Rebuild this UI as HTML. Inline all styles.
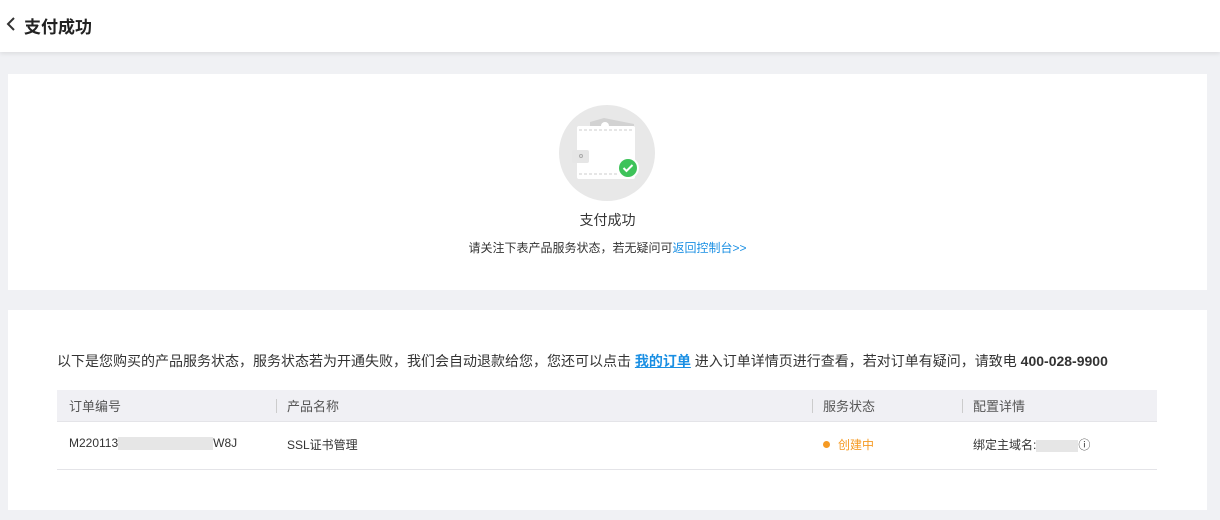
<!DOCTYPE html>
<html><head><meta charset="utf-8"><style>
*{margin:0;padding:0;box-sizing:border-box}
body{width:1220px;height:520px;background:#f0f1f4;font-family:"Liberation Sans","Noto Sans CJK SC",sans-serif;color:#333;position:relative;overflow:hidden}
.hdr{position:absolute;left:0;top:0;width:1220px;height:52px;background:#fff;box-shadow:0 2px 4px rgba(0,0,0,.08)}
.hdr .t{position:absolute;left:24px;top:13px;font-size:17px;font-weight:bold;color:#222}
.hdr svg{position:absolute;left:6px;top:17px}
.c1{position:absolute;left:8px;top:74px;width:1199px;height:216px;background:#fff}
.c2{position:absolute;left:8px;top:310px;width:1199px;height:200px;background:#fff}
.abs{position:absolute;white-space:nowrap}
</style></head><body>
<div class="hdr"><svg width="12" height="14" viewBox="0 0 12 14"><path d="M8 1L2 7l6 6" fill="none" stroke="#333" stroke-width="2"/></svg><div class="t">支付成功</div></div>
<div class="c1">
<svg class="abs" style="left:550px;top:30px" width="98" height="98" viewBox="0 0 98 98">
<circle cx="49" cy="49" r="48" fill="#e8e8e8"/>
<path d="M32 18l14-4 30 6v6H32z" fill="#d2d2d2"/>
<circle cx="47" cy="22" r="4" fill="#fff"/>
<rect x="19" y="22" width="58" height="53" rx="2" fill="#fff"/>
<line x1="21" y1="26" x2="75" y2="26" stroke="#ccc" stroke-dasharray="3 2"/>
<line x1="21" y1="70" x2="75" y2="70" stroke="#ccc" stroke-dasharray="3 2"/>
<rect x="14" y="46" width="17" height="13" rx="2" fill="#e6e6e6"/>
<circle cx="23" cy="52" r="1.5" fill="none" stroke="#aaa"/>
<circle cx="70" cy="64" r="11" fill="#fff"/><circle cx="70" cy="64" r="9" fill="#3ec35a"/>
<path d="M65.5 64l3 3 6-6" fill="none" stroke="#fff" stroke-width="2"/>
</svg>
<div class="abs" style="left:0;width:1199px;text-align:center;top:136px;font-size:14px;color:#333">支付成功</div>
<div class="abs" style="left:0;width:1199px;text-align:center;top:165px;font-size:12px;color:#333">请关注下表产品服务状态，若无疑问可<span style="color:#1a8fe3">返回控制台&gt;&gt;</span></div>
</div>
<div class="c2">
<div class="abs" style="left:49px;top:41px;font-size:14px;color:#333">以下是您购买的产品服务状态，服务状态若为开通失败，我们会自动退款给您，您还可以点击 <b style="color:#1a8fe3;text-decoration:underline">我的订单</b> 进入订单详情页进行查看，若对订单有疑问，请致电 <b>400-028-9900</b></div>
<div class="abs" style="left:49px;top:80px;width:1100px;height:32px;background:#f0f0f4;border-bottom:1px solid #e4e4e8;font-size:13px;color:#555">
<span class="abs" style="left:12px;top:6px">订单编号</span>
<span class="abs" style="left:219px;top:9px;width:1px;height:14px;background:#ccc"></span>
<span class="abs" style="left:230px;top:6px">产品名称</span>
<span class="abs" style="left:755px;top:9px;width:1px;height:14px;background:#ccc"></span>
<span class="abs" style="left:766px;top:6px">服务状态</span>
<span class="abs" style="left:905px;top:9px;width:1px;height:14px;background:#ccc"></span>
<span class="abs" style="left:916px;top:6px">配置详情</span>
</div>
<div class="abs" style="left:49px;top:112px;width:1100px;height:48px;border-bottom:1px solid #e4e4e8;font-size:12px;color:#333">
<span class="abs" style="left:12px;top:14px">M220113<span style="display:inline-block;width:95px;height:13px;background:#e6e6e6;vertical-align:middle"></span>W8J</span>
<span class="abs" style="left:230px;top:14px">SSL证书管理</span>
<span class="abs" style="left:766px;top:14px;color:#f59a23"><span style="display:inline-block;width:7px;height:7px;border-radius:50%;background:#f59a23;margin-right:8px;vertical-align:1px"></span>创建中</span>
<span class="abs" style="left:916px;top:14px">绑定主域名:<span style="display:inline-block;width:42px;height:12px;background:#e6e6e6;vertical-align:middle"></span>ⓘ</span>
</div>
</div>
</body></html>
